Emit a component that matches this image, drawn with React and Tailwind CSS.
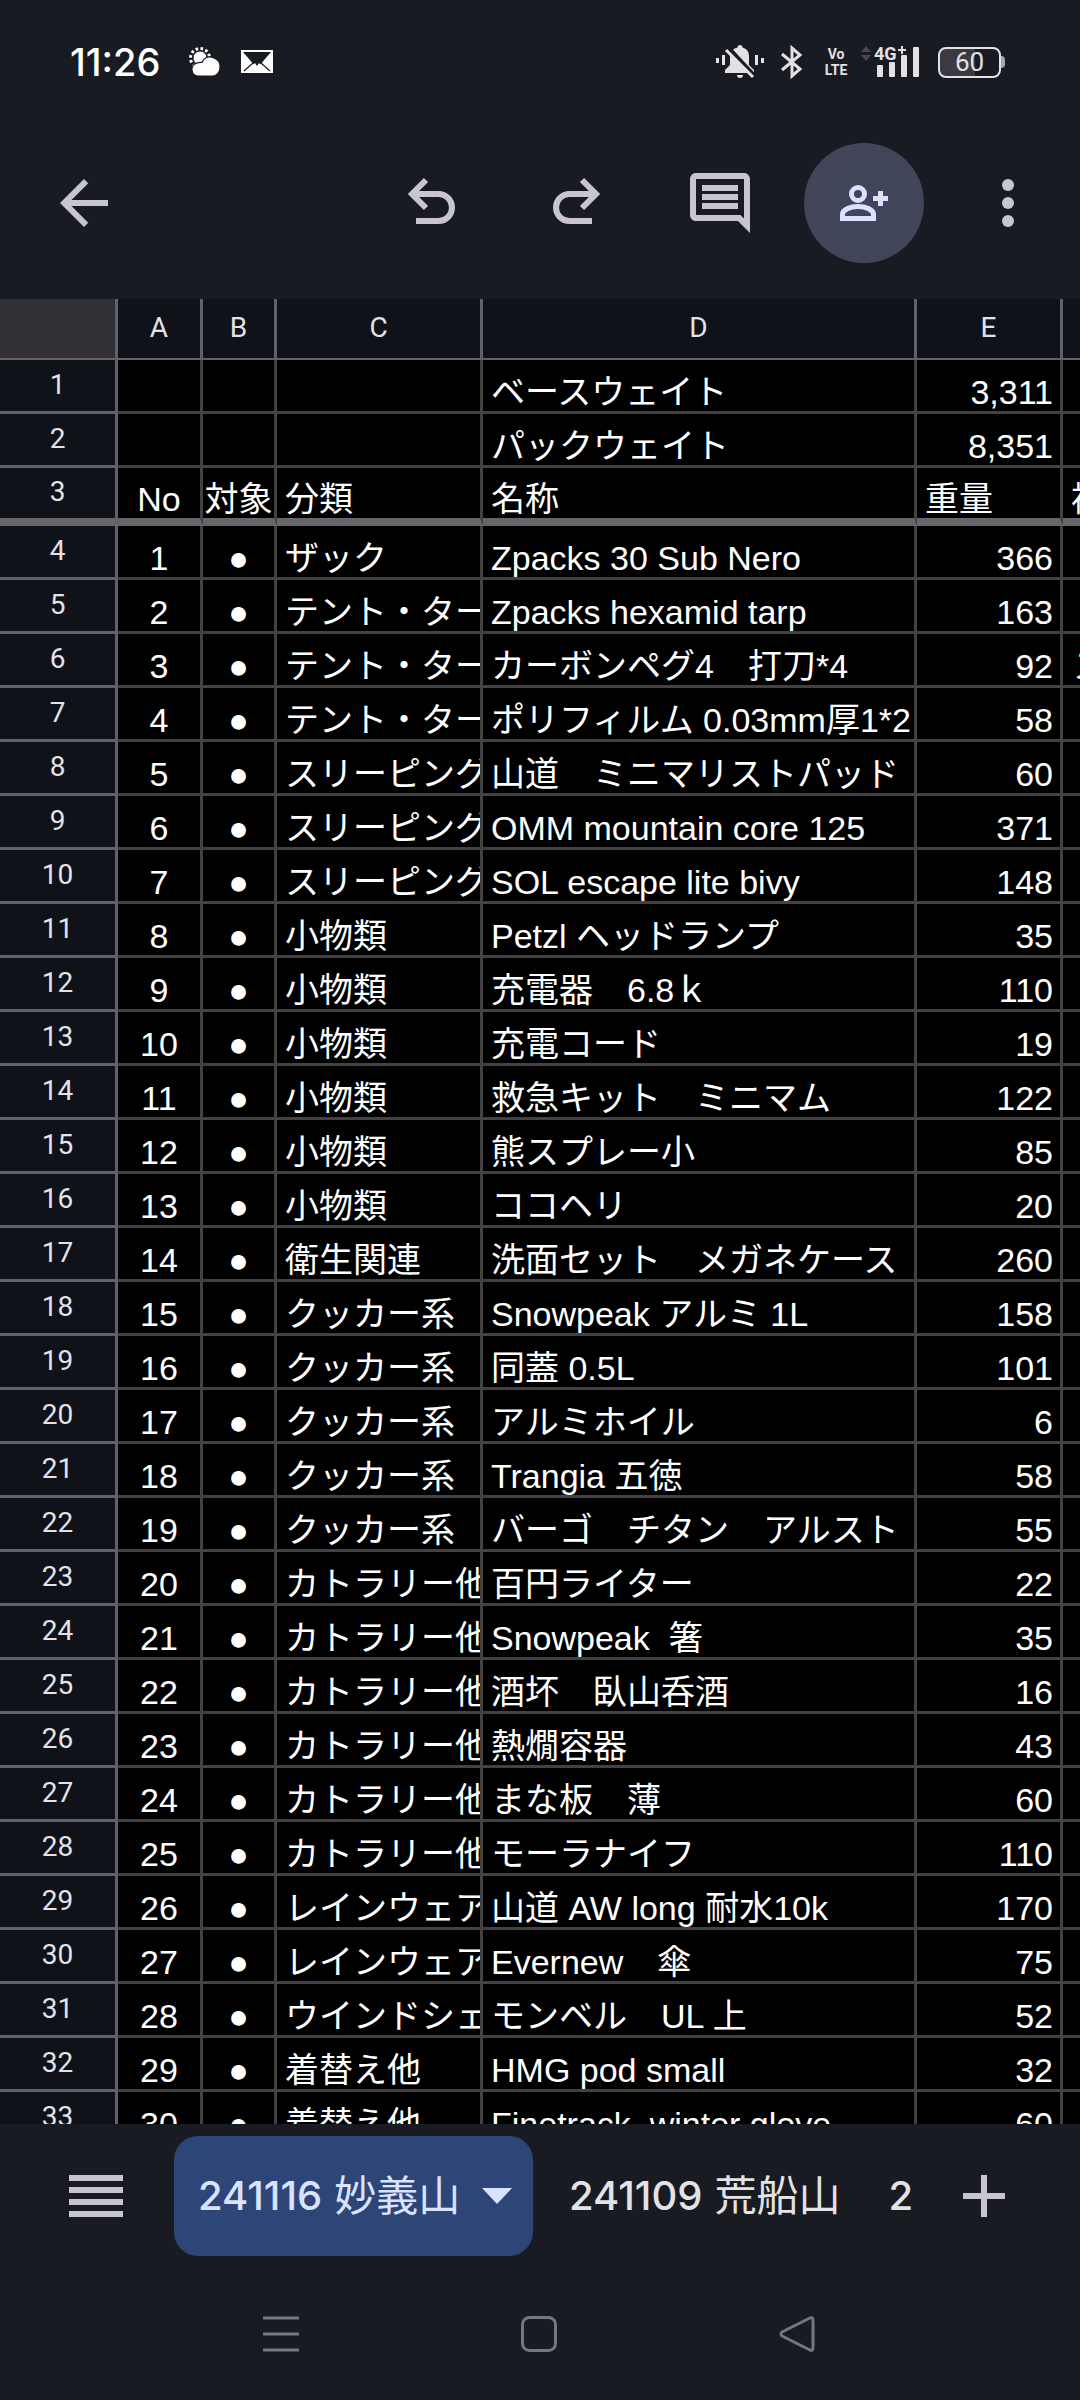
import React from 'react';

const columns = [
  { name: 'A', width: 'w-[85px]' },
  { name: 'B', width: 'w-[74px]' },
  { name: 'C', width: 'w-[206px]' },
  { name: 'D', width: 'w-[434px]' },
  { name: 'E', width: 'w-[146px]' },
];

const frozenRows = [
  ['', '', '', 'ベースウェイト', '3,311', ''],
  ['', '', '', 'パックウェイト', '8,351', ''],
  ['No', '対象', '分類', '名称', '重量', '補足'],
];

const items = [
  ['ザック', 'Zpacks 30 Sub Nero', '366'],
  ['テント・タープ', 'Zpacks hexamid tarp', '163'],
  ['テント・タープ', 'カーボンペグ4　打刀*4', '92', 'ス'],
  ['テント・タープ', 'ポリフィルム 0.03mm厚1*2', '58'],
  ['スリーピング', '山道　ミニマリストパッド', '60'],
  ['スリーピング', 'OMM mountain core 125', '371'],
  ['スリーピング', 'SOL escape lite bivy', '148'],
  ['小物類', 'Petzl ヘッドランプ', '35'],
  ['小物類', '充電器　6.8ｋ', '110'],
  ['小物類', '充電コード', '19'],
  ['小物類', '救急キット　ミニマム', '122'],
  ['小物類', '熊スプレー小', '85'],
  ['小物類', 'ココヘリ', '20'],
  ['衛生関連', '洗面セット　メガネケース', '260'],
  ['クッカー系', 'Snowpeak アルミ 1L', '158'],
  ['クッカー系', '同蓋 0.5L', '101'],
  ['クッカー系', 'アルミホイル', '6'],
  ['クッカー系', 'Trangia 五徳', '58'],
  ['クッカー系', 'バーゴ　チタン　アルスト', '55'],
  ['カトラリー他', '百円ライター', '22'],
  ['カトラリー他', 'Snowpeak  箸', '35'],
  ['カトラリー他', '酒坏　臥山呑酒', '16'],
  ['カトラリー他', '熱燗容器', '43'],
  ['カトラリー他', 'まな板　薄', '60'],
  ['カトラリー他', 'モーラナイフ', '110'],
  ['レインウェア', '山道 AW long 耐水10k', '170'],
  ['レインウェア', 'Evernew　傘', '75'],
  ['ウインドシェル', 'モンベル　UL 上', '52'],
  ['着替え他', 'HMG pod small', '32'],
  ['着替え他', 'Finetrack  winter glove', '60'],
];

const cellAlign = ['text-center', 'text-center', 'pl-2', 'pl-2', 'pr-[7px] text-right', 'pl-[10px]'];

function StatusBar() {
  return (
    <div className="flex h-[124px] shrink-0 items-center justify-between pl-[70px] pr-[75px] text-white">
      <div className="flex items-center">
        <span className="w-[93px] font-[Inter] text-[38px] leading-[40px] font-medium">11:26</span>
        <svg className="ml-[26px] h-8 w-8" viewBox="0 0 32 32">
          <circle cx="11" cy="12" r="9.5" fill="none" stroke="#fff" strokeWidth="3" strokeDasharray="2.6 2.4" />
          <circle cx="11" cy="12" r="7" fill="#fff" stroke="#181b22" strokeWidth="1" />
          <path d="M9 30a6.500 6.500 0 0 1-2-12.500 9 7 0 0 1 6-1 8.500 8.500 0 0 1 13-4A7.500 9 0 0 1 24 30Z" fill="#fff" stroke="#181b22" strokeWidth="1.2" />
        </svg>
        <svg className="ml-5 h-6 w-8" viewBox="0 0 32 24">
          <path d="M0 0h32v23H0Z" fill="#fff" />
          <path d="M2 2h28L18 16h-4Z" fill="#181b22" />
          <path d="m3 21 9-8M29 21l-9-8" stroke="#181b22" strokeWidth="1.2" />
          <path d="m12 15 2-2 2 3 2-3 2 2v4h-8Z" fill="#fff" />
        </svg>
      </div>
      <div className="flex items-center text-[#e3e1e6]">
        {/* 通知オフ */}
        <svg className="h-9 w-12" viewBox="0 0 48 36" fill="currentColor">
          <path d="M24 1a2.500 2.500 0 0 1 2.500 2.500A9 9 0 0 1 33 12v9l5 5v3H9v-3l5-5v-9a9 9 0 0 1 7.500-8.500A2.500 2.500 0 0 1 24 1ZM21 31h6a3 3 0 0 1-6 0Z" />
          <path d="M0 14h3v5H0ZM6 11h3v10H6ZM39 11h3v10h-3ZM45 14h3v5h-3Z" />
          <path d="m12 4 26 28" stroke="#181b22" strokeWidth="5" />
          <path d="m10 6 27 27" stroke="currentColor" strokeWidth="3" />
        </svg>
        <svg className="ml-4 h-9 w-6" viewBox="0 0 24 36" fill="none" stroke="currentColor" strokeWidth="3">
          <path d="m2 10 18 15-8 7V4l8 7L2 26" />
        </svg>
        <div className="ml-5 w-6 text-center font-[Roboto] text-[14px] leading-4 font-bold">
          <div>Vo</div>
          <div>LTE</div>
        </div>
        <svg className="ml-3 h-9 w-[62px]" viewBox="0 0 62 36" fill="currentColor">
          <path d="m6 2 5 6H1ZM1 11h10l-5 6Z" fill="#4b4750" />
          <text x="14" y="16" fontSize="18" fontWeight="bold" fontFamily="Roboto, sans-serif">4G</text>
          <path d="M38 5h3V2h2v3h3v2h-3v3h-2V7h-3Z" />
          <rect x="17" y="21" width="6" height="12" rx="1" />
          <rect x="29" y="18" width="6" height="15" rx="1" />
          <rect x="41" y="11" width="6" height="22" rx="1" />
          <rect x="53" y="3" width="6" height="30" rx="1" />
        </svg>
        <div className="ml-4 flex items-center">
          <div className="flex h-[31px] w-[63px] items-center justify-center rounded-lg border-2 border-[#e3e1e6] bg-linear-to-r from-[#3c3a41] from-60% to-[#181b22] to-60% font-[Roboto] text-[26px] leading-7">
            60
          </div>
          <div className="h-3 w-1 rounded-r-sm bg-[#a9a7ad]" />
        </div>
      </div>
    </div>
  );
}

function Toolbar() {
  return (
    <header className="flex h-[175px] shrink-0 items-start justify-between pl-[48px] pr-[36px] pt-[19px] text-[#c8c5d0]">
      <button type="button" aria-label="戻る" className="flex h-[120px] w-[72px] items-center justify-center">
        <svg className="h-[72px] w-[72px]" viewBox="0 0 24 24" fill="currentColor">
          <path d="M20 11H7.830l5.590-5.590L12 4l-8 8 8 8 1.410-1.410L7.830 13H20Z" />
        </svg>
      </button>
      <div className="flex items-center">
        <button type="button" aria-label="元に戻す" className="flex h-[120px] w-[144px] items-center justify-center">
          <svg className="h-[72px] w-[72px]" viewBox="0 0 72 72" fill="none" stroke="currentColor" strokeWidth="6">
            <path d="M20 54h22.500a13.500 13.500 0 0 0 0-27H17M30 13 16 27l14 14" />
          </svg>
        </button>
        <button type="button" aria-label="やり直す" className="flex h-[120px] w-[144px] items-center justify-center">
          <svg className="h-[72px] w-[72px]" viewBox="0 0 72 72" fill="none" stroke="currentColor" strokeWidth="6">
            <path d="M52 54H29.500a13.500 13.500 0 0 1 0-27H55M42 13l14 14-14 14" />
          </svg>
        </button>
        <button type="button" aria-label="コメント" className="flex h-[120px] w-[144px] items-center justify-center">
          <svg className="h-[72px] w-[72px]" viewBox="0 0 24 24" fill="currentColor">
            <path d="M21.990 4c0-1.100-.890-2-1.990-2H4c-1.100 0-2 .900-2 2v12c0 1.100.900 2 2 2h14l4 4-.010-18ZM20 4v13.170L18.830 16H4V4h16ZM6 12h12v2H6Zm0-3h12v2H6Zm0-3h12v2H6Z" />
          </svg>
        </button>
        <button type="button" aria-label="共有" className="mx-3 flex h-[120px] w-[120px] items-center justify-center rounded-full bg-[#414559] text-[#dde1ff]">
          <svg className="h-[54px] w-[54px]" viewBox="0 0 54 54" fill="none" stroke="currentColor" strokeWidth="5">
            <circle cx="21" cy="18" r="6.5" />
            <path d="M5.500 42.500v-4c0-5 8-8 15.500-8s15.500 3 15.500 8v4Z" />
            <path d="M36 22.500h15M43.500 15v15" />
          </svg>
        </button>
        <button type="button" aria-label="その他" className="ml-9 flex h-[120px] w-[72px] items-center justify-center">
          <svg className="h-[72px] w-[72px]" viewBox="0 0 24 24" fill="currentColor">
            <circle cx="12" cy="6" r="2" />
            <circle cx="12" cy="12" r="2" />
            <circle cx="12" cy="18" r="2" />
          </svg>
        </button>
      </div>
    </header>
  );
}

function SheetRow({ number, cells, isHeading }) {
  // 固定行の最後だけ下線が太い
  const height = isHeading ? 'h-[58px]' : 'h-[54px]';
  const border = isHeading ? 'border-b-8 border-b-[#67666b]' : 'border-b-3 border-b-[#424242]';
  const headBorder = isHeading ? 'border-b-8 border-b-[#67666b]' : 'border-b-3 border-b-[#5f6268]';
  return (
    <tr className={height}>
      <th scope="row" className={`border-r-3 border-r-[#5f6268] bg-[#0f1218] p-0 pb-[10px] align-bottom font-[Roboto] text-[28px] leading-8 font-normal text-[#e3e2e6] ${headBorder}`}>
        {number}
      </th>
      {cells.map((text, i) => (
        <td
          key={i}
          className={`overflow-hidden border-r-3 border-r-[#424242] bg-black p-0 align-bottom whitespace-pre last:border-r-0 ${isHeading && i > 1 ? 'pl-2' : cellAlign[i]} ${border}`}
        >
          {text}
        </td>
      ))}
    </tr>
  );
}

function Sheet() {
  return (
    <main className="min-h-0 flex-1 overflow-hidden bg-black">
      <table className="w-full table-fixed border-separate border-spacing-0 font-['Liberation_Sans','Noto_Sans_CJK_JP',sans-serif] text-[34px] leading-[38px] text-white">
        <thead>
          <tr className="h-[61px] font-[Roboto] text-[28px] leading-8 text-[#e3e2e6]">
            <td className="w-[118px] border-r-3 border-b-2 border-[#5f6268] bg-[#323034]" />
            {columns.map((col) => (
              <th key={col.name} scope="col" className={`overflow-hidden border-r-3 border-b-2 border-[#5f6268] bg-[#0f1218] p-0 pb-0.5 font-normal ${col.width}`}>
                {col.name}
              </th>
            ))}
            <td className="border-b-2 border-[#5f6268] bg-[#0f1218]" />
          </tr>
        </thead>
        <tbody>
          {frozenRows.map((cells, i) => (
            <SheetRow key={i} number={i + 1} cells={cells} isHeading={i === frozenRows.length - 1} />
          ))}
          {items.map(([category, name, weight, note = ''], i) => (
            <SheetRow key={i} number={i + 4} cells={[i + 1, '●', category, name, weight, note]} />
          ))}
        </tbody>
      </table>
    </main>
  );
}

function TabLabel({ date, place }) {
  return (
    <span className="flex items-center gap-3 whitespace-nowrap font-['Inter','Noto_Sans_CJK_JP',sans-serif]">
      <span className="text-[40px] leading-[60px] font-medium">{date}</span>
      <span className="text-[42px] leading-[60px]">{place}</span>
    </span>
  );
}

function SheetTabs() {
  return (
    <footer className="flex h-[146px] shrink-0 items-start pt-3 text-[#e3e2e6]">
      <button type="button" aria-label="すべてのシート" className="flex h-[120px] w-[174px] shrink-0 items-center pl-[69px] text-[#c8c5d0]">
        <svg className="h-[42px] w-[54px]" viewBox="0 0 54 42" fill="currentColor">
          <path d="M0 0h54v6H0ZM0 12h54v6H0ZM0 24h54v6H0ZM0 36h54v6H0Z" />
        </svg>
      </button>
      <nav className="flex min-w-0 flex-1 overflow-hidden">
        <button type="button" className="flex h-[120px] w-[359px] shrink-0 items-center justify-between rounded-3xl bg-[#2e4578] pl-6 pr-[21px] text-[#d9e2ff]">
          <TabLabel date="241116" place="妙義山" />
          <svg className="h-4 w-[30px]" viewBox="0 0 30 16" fill="currentColor">
            <path d="M0 0h30L15 16Z" />
          </svg>
        </button>
        <button type="button" className="flex h-[120px] shrink-0 items-center pl-9 pr-6">
          <TabLabel date="241109" place="荒船山" />
        </button>
        <button type="button" className="flex h-[120px] shrink-0 items-center pl-6">
          <TabLabel date="241102" place="" />
        </button>
      </nav>
      <button type="button" aria-label="シートを追加" className="flex h-[120px] w-[168px] shrink-0 items-center pl-[51px] text-[#c8c5d0]">
        <svg className="h-[42px] w-[42px]" viewBox="0 0 42 42" fill="currentColor">
          <path d="M18 0h6v18h18v6H24v18h-6V24H0v-6h18Z" />
        </svg>
      </button>
    </footer>
  );
}

function SystemNav() {
  return (
    <div className="flex h-[130px] shrink-0 items-start justify-center gap-[222px] pt-[46px] pr-[3px] text-[#77757d]">
      <button type="button" aria-label="最近" className="h-9 w-9">
        <svg viewBox="0 0 36 36" stroke="currentColor" strokeWidth="3">
          <path d="M0 2h36M0 18h36M0 34h36" />
        </svg>
      </button>
      <button type="button" aria-label="ホーム" className="h-9 w-9">
        <svg viewBox="0 0 36 36" fill="none" stroke="currentColor" strokeWidth="3">
          <rect x="1.5" y="1.5" width="33" height="33" rx="7" />
        </svg>
      </button>
      <button type="button" aria-label="戻る" className="h-9 w-9">
        <svg viewBox="0 0 36 36" fill="none" stroke="currentColor" strokeWidth="3" strokeLinejoin="round">
          <path d="M31 2 3 16q-2 2 0 4l28 14q3 1 3-2V4q0-3-3-2Z" />
        </svg>
      </button>
    </div>
  );
}

export default function App() {
  return (
    <div className="flex h-screen flex-col overflow-hidden bg-[#181b22]">
      <StatusBar />
      <Toolbar />
      <Sheet />
      <SheetTabs />
      <SystemNav />
    </div>
  );
}
